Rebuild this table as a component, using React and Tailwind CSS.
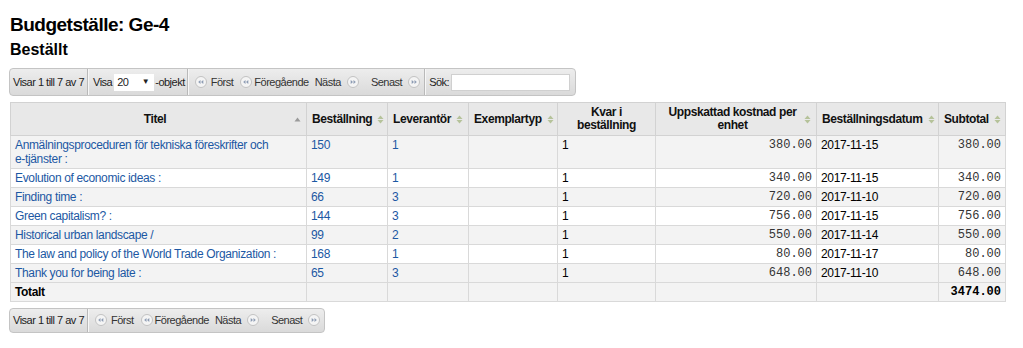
import React from "react";

const rows = [
  { t: <>Anmälningsproceduren för tekniska föreskrifter och <span className="whitespace-nowrap">e-tjänster</span> :</>, b: "150", l: "1", k: "1", u: "380.00", d: "2017-11-15", s: "380.00" },
  { t: "Evolution of economic ideas :", b: "149", l: "1", k: "1", u: "340.00", d: "2017-11-15", s: "340.00" },
  { t: "Finding time :", b: "66", l: "3", k: "1", u: "720.00", d: "2017-11-10", s: "720.00" },
  { t: "Green capitalism? :", b: "144", l: "3", k: "1", u: "756.00", d: "2017-11-15", s: "756.00" },
  { t: "Historical urban landscape /", b: "99", l: "2", k: "1", u: "550.00", d: "2017-11-14", s: "550.00" },
  { t: "The law and policy of the World Trade Organization :", b: "168", l: "1", k: "1", u: "80.00", d: "2017-11-17", s: "80.00" },
  { t: "Thank you for being late :", b: "65", l: "3", k: "1", u: "648.00", d: "2017-11-10", s: "648.00" },
];

function SortBoth() {
  return (
    <svg width="7" height="9" viewBox="0 0 7 9" className="shrink-0">
      <path d="M3.5 0.5 L6.5 4 L0.5 4 Z" fill="#b5c29a" />
      <path d="M3.5 8.5 L6.5 5 L0.5 5 Z" fill="#b5c29a" />
    </svg>
  );
}

function SortUp() {
  return (
    <svg width="7" height="5" viewBox="0 0 7 5" className="shrink-0">
      <path d="M3.5 0.5 L6.5 4.5 L0.5 4.5 Z" fill="#9a9a9a" />
    </svg>
  );
}

function PgIcon({ dir }) {
  return (
    <svg width="12" height="12" viewBox="0 0 12 12" className="shrink-0 block">
      <circle cx="6" cy="6" r="5.5" fill="#f4f4f4" stroke="#c2c2c2" strokeWidth="1" />
      {dir === "l" ? (
        <g fill="#8d9cb3">
          <path d="M3.2 6 L5.5 4.1 L5.5 7.9 Z" />
          <path d="M6 6 L8.3 4.1 L8.3 7.9 Z" />
        </g>
      ) : (
        <g fill="#8d9cb3">
          <path d="M8.8 6 L6.5 4.1 L6.5 7.9 Z" />
          <path d="M6 6 L3.7 4.1 L3.7 7.9 Z" />
        </g>
      )}
    </svg>
  );
}

function Paging() {
  return (
    <div className="flex items-center pl-[7px] pr-[4px] text-[#333] whitespace-nowrap shrink-0">
      <PgIcon dir="l" />
      <span className="ml-[4px]">Först</span>
      <span className="ml-[7px]"><PgIcon dir="l" /></span>
      <span className="ml-[2px]">Föregående</span>
      <span className="ml-[6px]">Nästa</span>
      <span className="ml-[6px]"><PgIcon dir="r" /></span>
      <span className="ml-[12px]">Senast</span>
      <span className="ml-[6px]"><PgIcon dir="r" /></span>
    </div>
  );
}

function Sep() {
  return <div className="self-stretch w-px shrink-0 bg-[#b9b9b9] shadow-[1px_0_0_#f7f7f7]" />;
}

const th = "border border-[#d2d2d2] bg-[#e8e8e8] font-bold text-[12px] leading-[13px] tracking-[-0.4px] text-[#111] px-[5px] py-[3px] align-middle";
const td = "border border-[#d9d9d9] px-[4px] pt-[2px] pb-[2px] align-top text-[12px] leading-[14px] tracking-[-0.35px]";
const mono = "font-['Liberation_Mono',monospace] text-[11px] tracking-normal text-right text-[#333]";
const bar = "inline-flex items-center rounded-[4px] border border-[#c4c4c4] bg-gradient-to-b from-[#ededed] to-[#dadada] text-[11px] tracking-[-0.5px] whitespace-nowrap";

export default function App() {
  return (
    <div className="bg-white w-[1023px] h-[348px] font-['Liberation_Sans',Arial,sans-serif] text-black pl-[10px] pt-[14px]">
      <h1 className="text-[19px] font-bold leading-[22px] tracking-[-0.5px]">Budgetställe: Ge-4</h1>
      <h2 className="text-[16px] font-bold leading-[19px] mt-[4px]">Beställt</h2>

      <div className="mt-[9px] -ml-px">
        <div className={`${bar} h-[28px]`}>
          <div className="px-[3px] text-[#222] shrink-0">Visar 1 till 7 av 7</div>
          <Sep />
          <div className="flex items-center pl-[5px] pr-[2px] text-[#222] shrink-0">
            <span>Visa</span>
            <span className="ml-[2px] w-[40px] h-[17px] bg-white flex items-center justify-between pl-[3px] pr-[5px] text-[11px]">
              <span>20</span>
              <span className="text-[8px]">▼</span>
            </span>
            <span className="ml-[1px]">-objekt</span>
          </div>
          <Sep />
          <Paging />
          <Sep />
          <div className="flex items-center pl-[4px] pr-[5px] gap-[2px] text-[#222] shrink-0">
            <span>Sök:</span>
            <span className="block w-[119px] h-[17px] bg-white border border-[#d0d0d0]" />
          </div>
        </div>
      </div>

      <table className="mt-[6px] border-collapse table-fixed w-[995px]">
        <colgroup>
          <col className="w-[296px]" />
          <col className="w-[81px]" />
          <col className="w-[81px]" />
          <col className="w-[89px]" />
          <col className="w-[98px]" />
          <col className="w-[161px]" />
          <col className="w-[122px]" />
          <col className="w-[67px]" />
        </colgroup>
        <thead>
          <tr className="h-[33px]">
            <th className={th}>
              <div className="flex items-center">
                <span className="flex-1 text-center">Titel</span>
                <SortUp />
              </div>
            </th>
            {["Beställning", "Leverantör", "Exemplartyp"].map((h) => (
              <th key={h} className={th}>
                <div className="flex items-center gap-[5px]">
                  <span>{h}</span>
                  <SortBoth />
                </div>
              </th>
            ))}
            <th className={th}>
              <div className="text-center">Kvar i<br />beställning</div>
            </th>
            <th className={th}>
              <div className="flex items-center">
                <span className="flex-1 text-center">Uppskattad kostnad per<br />enhet</span>
                <SortBoth />
              </div>
            </th>
            {["Beställningsdatum", "Subtotal"].map((h) => (
              <th key={h} className={th}>
                <div className="flex items-center gap-[5px]">
                  <span>{h}</span>
                  <SortBoth />
                </div>
              </th>
            ))}
          </tr>
        </thead>
        <tbody>
          {rows.map((r, i) => (
            <tr key={i} className={i % 2 === 0 ? "bg-[#f3f3f3]" : "bg-white"}>
              <td className={td}><span className="text-[#1c58a3]">{r.t}</span></td>
              <td className={td}><span className="text-[#1c58a3]">{r.b}</span></td>
              <td className={td}><span className="text-[#1c58a3]">{r.l}</span></td>
              <td className={td}></td>
              <td className={td}>{r.k}</td>
              <td className={`${td} ${mono}`}>{r.u}</td>
              <td className={td}>{r.d}</td>
              <td className={`${td} ${mono}`}>{r.s}</td>
            </tr>
          ))}
          <tr className="bg-[#f3f3f3]">
            <td className={`${td} font-bold`}>Totalt</td>
            <td className={td}></td>
            <td className={td}></td>
            <td className={td}></td>
            <td className={td}></td>
            <td className={td}></td>
            <td className={td}></td>
            <td className={`${td} ${mono} font-bold text-black`}>3474.00</td>
          </tr>
        </tbody>
      </table>

      <div className="mt-[5px] -ml-px">
        <div className={`${bar} h-[25px]`}>
          <div className="px-[3px] text-[#222] shrink-0">Visar 1 till 7 av 7</div>
          <Sep />
          <Paging />
        </div>
      </div>
    </div>
  );
}
